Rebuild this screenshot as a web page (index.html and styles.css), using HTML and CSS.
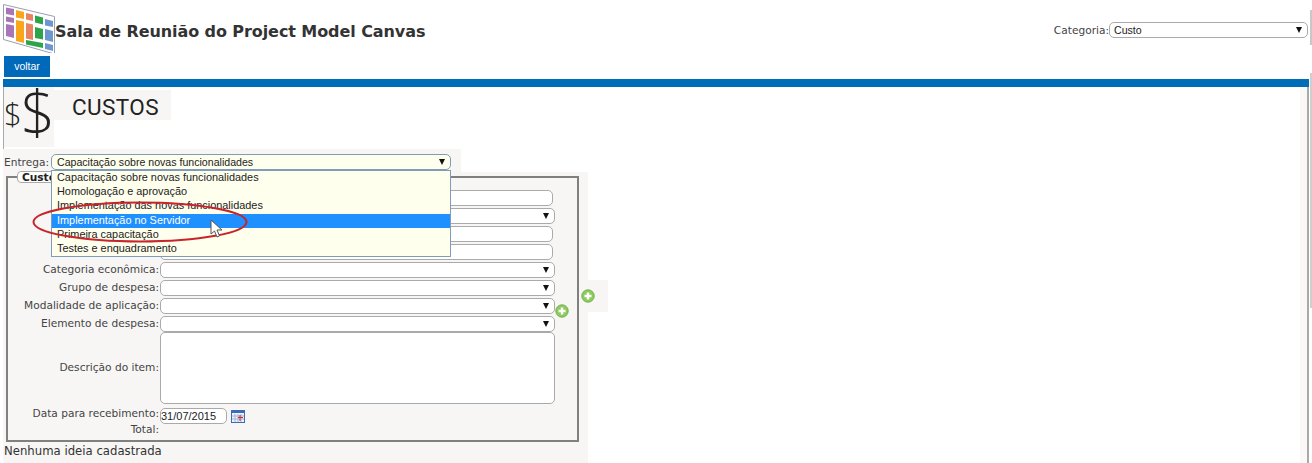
FILE: index.html
```html
<!DOCTYPE html>
<html lang="pt">
<head>
<meta charset="utf-8">
<title>Sala de Reunião do Project Model Canvas</title>
<link rel="stylesheet" href="styles.css">
</head>
<body>
<div class="page">
  <header class="top">
    <svg class="logo" width="52" height="52" viewBox="0 0 52 52">
      <polygon points="0.5,3.5 51.5,15.5 51.5,53 0.5,38.5" fill="#fff" stroke="#9a9fb0"/>
      <polygon points="3,6.5 11,8 11,14.5 3,13" fill="#a974b8"/>
      <polygon points="3,15.5 11,17 11,22 3,20.5" fill="#a974b8"/>
      <polygon points="3,23 11,24.5 11,37 3,35" fill="#a974b8"/>
      <polygon points="13,9 21,11 21,18 13,16.5" fill="#f9a61a"/>
      <polygon points="13,19 21,20.5 21,42 13,40" fill="#f9a61a"/>
      <polygon points="23,12 30,13.5 30,20 23,18.5" fill="#e98360"/>
      <polygon points="23,22 30,23.5 30,39 23,37.5" fill="#e98360"/>
      <polygon points="32,14.5 40,16.5 40,23.5 32,21.5" fill="#2da44a"/>
      <polygon points="32,26 40,28 40,38.5 32,37" fill="#2da44a"/>
      <polygon points="23,39 40,42 40,47 23,43.5" fill="#2da44a"/>
      <polygon points="42,18 50,20 50,26 42,24.5" fill="#6d96d0"/>
      <polygon points="42,28 50,30 50,41 42,39" fill="#6d96d0"/>
      <polygon points="42,42 50,44 50,50 42,48" fill="#6d96d0"/>
    </svg>
    <h1 class="title">Sala de Reunião do Project Model Canvas</h1>
    <div class="category">
      <span class="label">Categoria:</span>
      <div class="select select-cat"><span>Custo</span><i class="arrow"></i></div>
    </div>
  </header>

  <nav class="nav"><a class="back">voltar</a></nav>
  <div class="bar"></div>

  <main class="content">
    <div class="heading">
      <div class="money"><span class="dollar-s">$</span><span class="dollar-l">$</span></div>
      <h2 class="section-title">CUSTOS</h2>
    </div>

    <div class="delivery">
      <span class="label delivery-label">Entrega:</span>
      <div class="combo">
        <div class="select select-open"><span>Capacitação sobre novas funcionalidades</span><i class="arrow"></i></div>
        <ul class="options">
          <li>Capacitação sobre novas funcionalidades</li>
          <li>Homologação e aprovação</li>
          <li>Implementação das novas funcionalidades</li>
          <li class="current">Implementação no Servidor</li>
          <li>Primeira capacitação</li>
          <li>Testes e enquadramento</li>
        </ul>
        <svg class="ring" width="216" height="44" viewBox="0 0 216 44"><ellipse cx="108" cy="22" rx="106.5" ry="19.5" fill="none" stroke="#c8242b" stroke-width="2"/></svg>
        <svg class="pointer" width="14" height="20" viewBox="0 0 14 20"><path d="M1 1 L1 15 L4.5 12 L7 18 L9.5 17 L7 11 L12 11 Z" fill="#fff" stroke="#555" stroke-width="1"/></svg>
      </div>
    </div>

    <div class="form-wrap">
      <div class="form-panel">
        <fieldset class="box">
          <legend class="legend">Custo</legend>
          <div class="grid">
            <span class="label"></span><div class="input"></div>
            <span class="label"></span><div class="select wide"><i class="arrow"></i></div>
            <span class="label"></span><div class="input"></div>
            <span class="label"></span><div class="input"></div>
            <span class="label">Categoria econômica:</span><div class="select wide"><i class="arrow"></i></div>
            <span class="label">Grupo de despesa:</span><div class="select wide"><i class="arrow"></i></div>
            <span class="label">Modalidade de aplicação:</span><div class="select wide"><i class="arrow"></i></div>
            <span class="label">Elemento de despesa:</span><div class="select wide"><i class="arrow"></i></div>
            <span class="label desc-label">Descrição do item:</span><div class="textarea"></div>
            <span class="label">Data para recebimento:</span>
            <div class="date-row">
              <div class="input date">31/07/2015</div>
              <svg class="cal" width="14" height="13" viewBox="0 0 14 13">
                <rect x="0.5" y="0.5" width="13" height="12" fill="#eef3fb" stroke="#3c6cb4"/>
                <rect x="1" y="1" width="12" height="2" fill="#3c6cb4"/>
                <path d="M1 6h12M1 9h12M4 4v8M7 4v8M10 4v8" stroke="#9db5d8" stroke-width="1"/>
                <path d="M7 7.5h5M9 5v6" stroke="#d8262c" stroke-width="1"/>
              </svg>
            </div>
            <span class="label total-label">Total:</span><div class="total"></div>
          </div>
          <svg class="plus plus-in" width="14" height="14" viewBox="0 0 14 14"><circle cx="7" cy="7" r="6.2" fill="#8ccb5e" stroke="#74b04a"/><path d="M7 3.5v7M3.5 7h7" stroke="#fff" stroke-width="2.4"/></svg>
        </fieldset>
        <p class="empty">Nenhuma ideia cadastrada</p>
      </div>
      <div class="side"><svg class="plus" width="14" height="14" viewBox="0 0 14 14"><circle cx="7" cy="7" r="6.2" fill="#8ccb5e" stroke="#74b04a"/><path d="M7 3.5v7M3.5 7h7" stroke="#fff" stroke-width="2.4"/></svg></div>
    </div>
  </main>
</div>
</body>
</html>
```
FILE: styles.css
```css
* { box-sizing: border-box; }
html, body { margin: 0; padding: 0; background: #fff; }
body { font-family: "DejaVu Sans", sans-serif; font-size: 10.6px; color: #444; overflow: hidden; }
.page { width: 1312px; height: 463px; overflow: hidden; padding-right: 3px; position: relative; }
.page::after { content: ""; position: absolute; right: 0; top: 73px; width: 2px; height: 235px; background: #cfcfcf; }
.top { display: flex; height: 56px; padding-left: 3px; align-items: flex-start; position: relative; }
.top::after { content: ""; position: absolute; right: -3px; top: 10px; width: 2px; height: 35px; background: #c8c8c8; }
.logo { margin-top: 1px; flex: none; }
.title { margin: 22px 0 0 0; font-size: 16px; line-height: 20px; font-weight: bold; color: #333; font-family: "DejaVu Sans", sans-serif; letter-spacing: -0.08px; white-space: nowrap; }
.category { margin-left: auto; margin-top: 22px; display: flex; align-items: center; }
.label { color: #444; white-space: nowrap; line-height: 16px; }
.select, .input, .textarea { background: #fff; border: 1px solid #aaa; border-radius: 5px; height: 16px; display: flex; align-items: center; font-size: 10.6px; color: #222; font-family: "Liberation Sans", sans-serif; padding-left: 4px; position: relative; }
.select-cat { width: 199px; height: 16px; margin-right: 1px; }
.arrow { position: absolute; right: 5px; top: 4px; width: 0; height: 0; border-left: 3.5px solid transparent; border-right: 3.5px solid transparent; border-top: 6px solid #111; }
.nav { height: 21px; padding-left: 4px; }
.back { display: block; width: 46px; height: 21px; background: #0069b9; color: #fff; font-family: "Liberation Sans", sans-serif; font-size: 10.5px; font-weight: normal; line-height: 20px; text-align: center; }
.bar { height: 8px; margin: 2px 0 0 3px; background: #006cb8; }
.content { padding-left: 3px; position: relative; border-right: 2px solid #aaa9a7; margin-right: 0; width: 1309px; }
.content::after { content: ""; position: absolute; top: 0; right: 0; bottom: 0; width: 7px; background: #f9f8f7; }
.heading { display: flex; height: 62px; align-items: flex-start; border-left: 1px solid #aaa; }
.money { width: 50px; height: 60px; background: #f7f6f5; position: relative; display: flex; align-items: center; font-family: "Open Sans", sans-serif; font-weight: 300; color: #222; line-height: 1; }
.dollar-s { font-size: 31px; margin-top: -8px; }
.dollar-l { font-size: 60px; margin-top: -10px; margin-left: -1px; }
.section-title { margin: 3px 0 0; width: 117px; height: 30px; background: #f7f6f5; padding: 2px 0 0 18px; font-family: Roboto, sans-serif; font-weight: 400; font-size: 22.5px; line-height: 30px; letter-spacing: 0.4px; color: #222; }
.delivery { display: flex; align-items: flex-start; width: 458px; height: 23px; background: #f7f6f5; padding: 5px 0 0 1px; }
.delivery-label { width: 47px; flex: none; }
.combo { position: relative; }
.select-open { width: 400px; height: 16px; background: #ffffee; border-color: #7f9db9; padding-left: 5px; }
.options { position: absolute; left: 0; top: 16px; width: 400px; height: 87px; margin: 0; padding: 0; list-style: none; background: #ffffee; border: 1px solid #7f9db9; font-family: "Liberation Sans", sans-serif; font-size: 10.9px; color: #222; z-index: 2; }
.options li { height: 14.2px; line-height: 13px; padding-left: 5px; white-space: nowrap; }
.options .current { background: #1e90ff; color: #fff; }
.ring { position: absolute; left: -19px; top: 46px; z-index: 3; }
.pointer { position: absolute; left: 159px; top: 65px; z-index: 4; }
.form-wrap { display: flex; align-items: flex-start; }
.form-panel { width: 585px; height: 291px; background: #f7f6f5; padding-left: 3px; }
.box { position: relative; width: 573px; height: 271px; margin: -1px 0 0; padding: 0; border: 2px solid #808080; background: #f7f6f5; }
.legend { margin-left: 9px; padding: 0 4px; height: 12px; border: 1px solid #aaa; border-radius: 4px; background: #fff; font-weight: bold; font-size: 10.6px; line-height: 10px; color: #222; }
.grid { display: grid; grid-template-columns: 152px 1fr; row-gap: 2px; margin-top: 7px; align-items: center; }
.grid > .label { text-align: right; padding-right: 1px; align-self: start; margin-top: -1px; }
.grid > .input { margin-right: 24px; }
.grid > .select.wide { margin-right: 22px; }
.textarea { height: 72px; margin: -2px 22px 0 0; }
.grid > .desc-label { align-self: center; margin: 0 0 4px; }
.date-row { display: flex; align-items: center; gap: 4px; margin-top: 2px; }
.input.date { width: 67px; height: 16px; padding-left: 0; font-size: 11px; }
.grid > .total-label { margin-top: -5px; }
.total { height: 14px; }
.plus { display: block; }
.plus-in { position: absolute; left: 547px; top: 121px; }
.empty { margin: 2px 0 0 -2px; font-size: 11.7px; line-height: 14px; color: #333; }
.side { width: 20px; height: 32px; margin-top: 108px; background: #f7f6f5; padding-top: 9px; }
.side .plus { margin-left: -7px; }
```
